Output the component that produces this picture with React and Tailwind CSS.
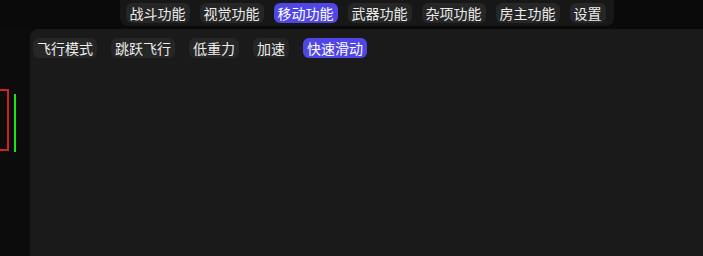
import React from "react";

const tabs = ["战斗功能", "视觉功能", "移动功能", "武器功能", "杂项功能", "房主功能", "设置"];
const subTabs = ["飞行模式", "跳跃飞行", "低重力", "加速", "快速滑动"];

const Tab = ({ label, active }) => (
  <button
    className={
      active
        ? "block px-[4px] py-[1px] rounded-md bg-[#4f46e5] text-white text-[14px] leading-[18px]"
        : "block px-[4px] py-[1px] rounded-md bg-[#262626] text-[#ececec] text-[14px] leading-[18px]"
    }
  >
    {label}
  </button>
);

const App = () => {
  return (
    <div
      className="relative w-[703px] h-[256px] bg-[#0a0a0a] overflow-hidden flex flex-col"
      style={{ fontFamily: '"Noto Sans CJK SC", "Noto Sans", sans-serif' }}
    >
      {/* top menu, centred over the panel */}
      <div className="h-[29px] flex justify-center pl-[30px]">
        <div className="flex items-start gap-[10px] h-[26px] pt-[3px] pl-[6px] pr-[8px] bg-[#171717] rounded-b-lg">
          {tabs.map((t) => (
            <Tab key={t} label={t} active={t === "移动功能"} />
          ))}
        </div>
      </div>

      <div className="flex flex-1">
        {/* left strip with esp boxes */}
        <div className="relative w-[30px] bg-[#0c0c0c]">
          <div className="absolute left-[-4px] top-[60px] w-[13px] h-[62px] border-2 border-[#d02020]" />
          <div className="absolute left-[14px] top-[65px] w-[2px] h-[58px] bg-[#19e619]" />
        </div>

        {/* panel */}
        <div className="flex-1 bg-[#1a1a1a] rounded-tl-lg pl-[3px] pt-[9px]">
          <div className="flex items-start gap-[14px]">
            {subTabs.map((t) => (
              <Tab key={t} label={t} active={t === "快速滑动"} />
            ))}
          </div>
        </div>
      </div>
    </div>
  );
};

export default App;
